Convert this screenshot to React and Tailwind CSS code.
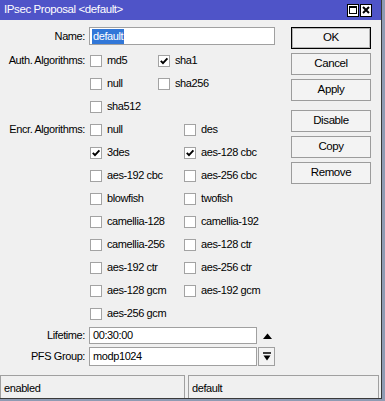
import React from 'react';

// Winbox-style IPsec Proposal dialog

function Check({ label, checked, width }) {
  return (
    <div className={`flex items-center ${width}`}>
      <span className="ml-[1px] flex h-[12px] w-[12px] items-center justify-center border border-[#a3a3a3] bg-white">
        {checked && (
          <svg width="10" height="10" viewBox="0 0 10 10">
            <path d="M1.8 4.8 L4 7.2 L8.4 2.4" fill="none" stroke="#000" strokeWidth="1.9" />
          </svg>
        )}
      </span>
      <span className="ml-[5px] whitespace-nowrap">{label}</span>
    </div>
  );
}

function Row({ label, children }) {
  return (
    <div className="flex h-[23px] items-center">
      <div className="w-[86px] whitespace-nowrap pr-[1px] text-right">{label}</div>
      <div className="ml-[3px] flex">{children}</div>
    </div>
  );
}

const encr = [
  [['3des', true], ['aes-128 cbc', true]],
  [['aes-192 cbc'], ['aes-256 cbc']],
  [['blowfish'], ['twofish']],
  [['camellia-128'], ['camellia-192']],
  [['camellia-256'], ['aes-128 ctr']],
  [['aes-192 ctr'], ['aes-256 ctr']],
  [['aes-128 gcm'], ['aes-192 gcm']],
  [['aes-256 gcm']],
];

function Btn({ children, primary, className = '' }) {
  return (
    <button
      type="button"
      className={`flex h-[22px] w-[80px] items-center justify-center bg-[#f3f3f3] ${
        primary ? 'border border-black shadow-[inset_0_0_0_1px_#b5b5b5]' : 'border border-[#9c9c9c]'
      } ${className}`}
    >
      {children}
    </button>
  );
}

export default function App() {
  return (
    <div className="h-[401px] w-[385px] overflow-hidden bg-[#8f9bb3] font-['Liberation_Sans',Arial,sans-serif] text-[11px] leading-none tracking-[-0.4px] text-black">
      <div className="flex h-[399px] w-[382px] flex-col border-b border-r border-[#3a3a3a] bg-[#f0f0f0]">
        {/* title bar */}
        <div className="flex h-[20px] items-center bg-[#4f54c8] pl-[4px] pr-[9px]">
          <span className="text-[11.5px] text-white">IPsec Proposal &lt;default&gt;</span>
          <div className="ml-auto flex gap-[1px]">
            <span className="flex h-[13px] w-[12px] items-center justify-center border border-black bg-white">
              <span className="h-[8px] w-[8px] border border-t-2 border-black" />
            </span>
            <span className="flex h-[13px] w-[12px] items-center justify-center border border-black bg-white">
              <svg width="8" height="8" viewBox="0 0 8 8">
                <path d="M1 1 L7 7 M7 1 L1 7" stroke="#000" strokeWidth="2" />
              </svg>
            </span>
          </div>
        </div>

        {/* body */}
        <div className="flex flex-1">
          <div className="w-[275px] pt-[7px]">
            <div className="flex h-[18px] items-center">
              <div className="w-[86px] pr-[1px] text-right">Name:</div>
              <div className="ml-[3px] flex h-[18px] w-[186px] items-center border border-[#a0a0a0] bg-white pl-[2px]">
                <span className="bg-[#3177d8] px-[1px] py-[2px] text-white">default</span>
              </div>
            </div>
            <div className="mt-[4px]">
              <Row label="Auth. Algorithms:">
                <Check label="md5" width="w-[68px]" />
                <Check label="sha1" checked />
              </Row>
              <Row label="">
                <Check label="null" width="w-[68px]" />
                <Check label="sha256" />
              </Row>
              <Row label="">
                <Check label="sha512" />
              </Row>
              <Row label="Encr. Algorithms:">
                <Check label="null" width="w-[94px]" />
                <Check label="des" />
              </Row>
              {encr.map((r, i) => (
                <Row key={i} label="">
                  <Check label={r[0][0]} checked={r[0][1]} width="w-[94px]" />
                  {r[1] && <Check label={r[1][0]} checked={r[1][1]} />}
                </Row>
              ))}
            </div>
            <div className="mt-[2px] flex h-[17px] items-center">
              <div className="w-[86px] pr-[1px] text-right">Lifetime:</div>
              <div className="ml-[3px] flex h-[17px] w-[168px] items-center border border-[#a0a0a0] bg-white pl-[3px]">
                00:30:00
              </div>
              <svg className="ml-[6px]" width="9" height="6" viewBox="0 0 9 6">
                <path d="M0 6 L4.5 0.5 L9 6 Z" fill="#000" />
              </svg>
            </div>
            <div className="mt-[3px] flex h-[19px] items-center">
              <div className="w-[86px] pr-[1px] text-right">PFS Group:</div>
              <div className="ml-[3px] flex h-[19px] w-[168px] items-center border border-[#a0a0a0] bg-white pl-[3px]">
                modp1024
              </div>
              <div className="ml-[1px] flex h-[19px] w-[17px] items-center justify-center border border-[#a0a0a0] bg-[#f3f3f3]">
                <svg width="8" height="9" viewBox="0 0 8 9">
                  <path d="M0 1 H8" stroke="#000" strokeWidth="1.5" />
                  <path d="M0.5 3.5 H7.5 L4 8.5 Z" fill="#000" />
                </svg>
              </div>
            </div>
          </div>

          <div className="ml-[16px] flex flex-col pt-[7px] text-[11.5px]">
            <Btn primary>OK</Btn>
            <Btn className="mt-[4px]">Cancel</Btn>
            <Btn className="mt-[4px]">Apply</Btn>
            <Btn className="mt-[9px]">Disable</Btn>
            <Btn className="mt-[4px]">Copy</Btn>
            <Btn className="mt-[4px]">Remove</Btn>
          </div>
        </div>

        {/* status bar */}
        <div className="flex h-[23px] gap-[3px]">
          <div className="flex w-[185px] items-center border border-b-0 border-[#a0a0a0] pl-[3px] pt-[2px]">enabled</div>
          <div className="flex w-[191px] items-center border border-b-0 border-[#a0a0a0] pl-[3px] pt-[2px]">default</div>
        </div>
      </div>
    </div>
  );
}
